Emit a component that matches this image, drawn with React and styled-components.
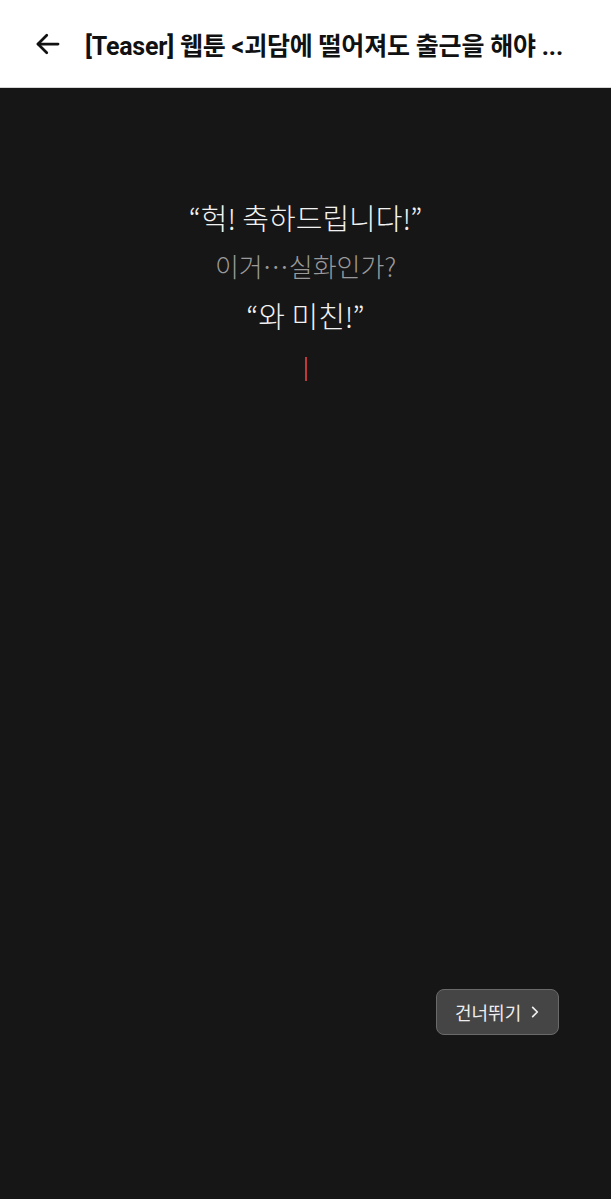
import React from "react";
import styled, { createGlobalStyle } from "styled-components";

const Global = createGlobalStyle`
  html, body { margin: 0; padding: 0; background: #161616; }
  body { font-family: "Noto Sans CJK KR", "Noto Sans", sans-serif; }
  #root { min-height: 100vh; }
`;

const Page = styled.div`
  display: flex;
  flex-direction: column;
  height: 1199px;
  background: #161616;
`;

const Header = styled.header`
  display: flex;
  align-items: center;
  gap: 21px;
  height: 88px;
  padding: 0 30px 0 32px;
  background: #ffffff;
  border-bottom: 1px solid #d6d6d6;
  box-sizing: border-box;
  flex-shrink: 0;
`;

const BackButton = styled.button`
  display: flex;
  align-items: center;
  justify-content: center;
  padding: 0;
  border: 0;
  background: none;
  width: 32px;
  height: 32px;
`;

const Title = styled.h1`
  margin: 0;
  font-family: "Roboto", "Noto Sans CJK KR", sans-serif;
  font-size: 25px;
  font-weight: 700;
  color: #111111;
  white-space: nowrap;
  overflow: hidden;
  letter-spacing: -0.2px;
`;

const Stage = styled.main`
  flex: 1;
  display: flex;
  flex-direction: column;
  align-items: center;
  padding-top: 110px;
  position: relative;
`;

const Line = styled.p`
  margin: 0;
  height: 49px;
  line-height: 38px;
  font-family: "Noto Sans CJK KR", sans-serif;
  font-weight: 300;
  font-size: ${(p) => (p.$dim ? "26px" : "29px")};
  color: ${(p) => (p.$dim ? "#9a9a9a" : "#f2f2f2")};
`;

const Cursor = styled.span`
  display: block;
  width: 2px;
  height: 24px;
  margin-top: 12px;
  background: #c0393a;
`;

const SkipButton = styled.button`
  position: absolute;
  left: 436px;
  top: 901px;
  display: flex;
  align-items: center;
  gap: 7px;
  height: 46px;
  padding: 0 16px 0 18px;
  border: 1px solid #6a6a6a;
  border-radius: 8px;
  background: #454545;
  color: #eeeeee;
  font-family: "Noto Sans CJK KR", sans-serif;
  font-size: 18px;
  box-sizing: border-box;
`;

export default function App() {
  return (
    <>
      <Global />
      <Page>
        <Header>
          <BackButton aria-label="back">
            <svg width="30" height="30" viewBox="0 0 24 24" fill="none" stroke="#111" strokeWidth="2.2" strokeLinecap="round" strokeLinejoin="round">
              <path d="M20 12H4" />
              <path d="M11 5l-7 7 7 7" />
            </svg>
          </BackButton>
          <Title>[Teaser] 웹툰 &lt;괴담에 떨어져도 출근을 해야 ...</Title>
        </Header>
        <Stage>
          <Line>“헉! 축하드립니다!”</Line>
          <Line $dim>이거…실화인가?</Line>
          <Line>“와 미친!”</Line>
          <Cursor />
          <SkipButton>
            건너뛰기
            <svg width="14" height="14" viewBox="0 0 24 24" fill="none" stroke="#eee" strokeWidth="3" strokeLinecap="round" strokeLinejoin="round">
              <path d="M8 4l8 8-8 8" />
            </svg>
          </SkipButton>
        </Stage>
      </Page>
    </>
  );
}
